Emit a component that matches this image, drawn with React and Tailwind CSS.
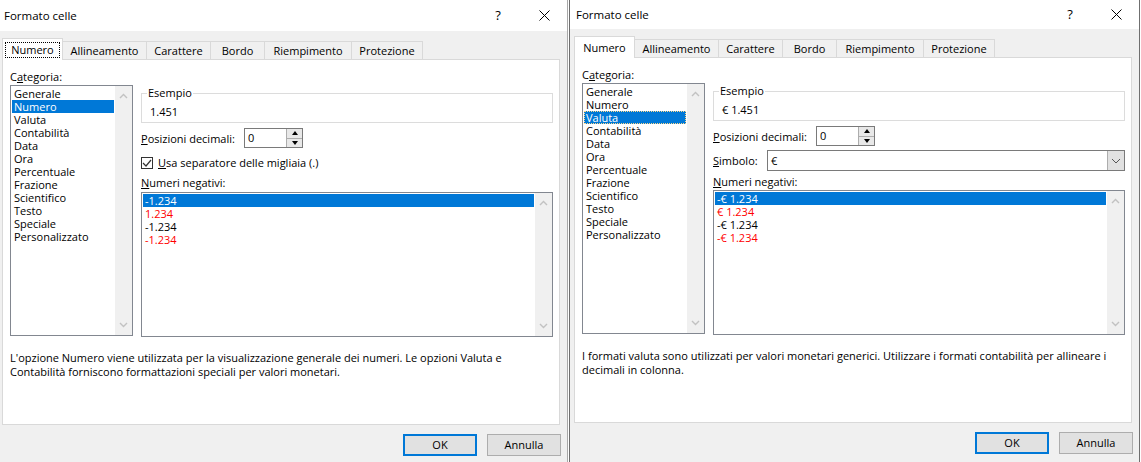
import React from 'react';

const categories = [
  'Generale', 'Numero', 'Valuta', 'Contabilità', 'Data', 'Ora', 'Percentuale',
  'Frazione', 'Scientifico', 'Testo', 'Speciale', 'Personalizzato',
];

const tabs = [
  { label: 'Numero', w: 'w-[61px]' },
  { label: 'Allineamento', w: 'w-[84px]' },
  { label: 'Carattere', w: 'w-[64px]' },
  { label: 'Bordo', w: 'w-[54px]' },
  { label: 'Riempimento', w: 'w-[87px]' },
  { label: 'Protezione', w: 'w-[71px]' },
];

function Chevron({ up }) {
  return (
    <svg width="9" height="6" viewBox="0 0 9 6">
      <polyline
        points={up ? '1,5 4.5,1.5 8,5' : '1,1 4.5,4.5 8,1'}
        fill="none"
        stroke="#c2c2c2"
        strokeWidth="1.4"
      />
    </svg>
  );
}

function ListBox({ items, selected, focus, className }) {
  return (
    <div className={`flex border border-[#828790] bg-white ${className}`}>
      <div className="flex-1 p-[1px]">
        {items.map((it, i) => (
          <div
            key={i}
            className={`h-[13px] leading-[13px] pl-[2px] whitespace-nowrap ${
              i === selected ? 'bg-[#0078d7] text-white' : it.red ? 'text-[#ff0000]' : 'text-black'
            } ${i === selected && focus ? 'outline-1 outline-dotted outline-[#ffd98a] -outline-offset-1' : ''}`}
          >
            {it.label}
          </div>
        ))}
      </div>
      <div className="w-[17px] bg-[#f0f0f0] flex flex-col justify-between">
        <div className="h-[20px] flex items-center justify-center">
          <Chevron up />
        </div>
        <div className="h-[20px] flex items-center justify-center">
          <Chevron />
        </div>
      </div>
    </div>
  );
}

function Spinner() {
  return (
    <div className="flex w-[59px] h-[20px] border border-[#7a7a7a] bg-white">
      <div className="flex-1 pl-[3px] leading-[18px]">0</div>
      <div className="w-[16px] flex flex-col border-l border-[#adadad]">
        <div className="flex-1 flex items-center justify-center bg-[#e8e8e8] border-b border-[#adadad]">
          <svg width="6" height="4" viewBox="0 0 6 4">
            <polygon points="0,4 3,0 6,4" fill="#000" />
          </svg>
        </div>
        <div className="flex-1 flex items-center justify-center bg-[#e8e8e8]">
          <svg width="6" height="4" viewBox="0 0 6 4">
            <polygon points="0,0 6,0 3,4" fill="#000" />
          </svg>
        </div>
      </div>
    </div>
  );
}

function Dialog({ variant, titleH, className }) {
  const isValuta = variant === 'valuta';
  const negatives = isValuta
    ? [
        { label: '-€ 1.234' },
        { label: '€ 1.234', red: true },
        { label: '-€ 1.234' },
        { label: '-€ 1.234', red: true },
      ]
    : [
        { label: '-1.234' },
        { label: '1.234', red: true },
        { label: '-1.234' },
        { label: '-1.234', red: true },
      ];

  return (
    <div className={`w-[571px] h-[462px] shrink-0 flex flex-col bg-[#f0f0f0] ${className}`}>
      {/* title bar */}
      <div className={`${titleH} bg-white flex items-center pl-[6px] shrink-0`}>
        <span className="text-[11.5px]">Formato celle</span>
        <div className="ml-auto flex h-full">
          <div className="w-[46px] flex items-center justify-center text-[13px]">?</div>
          <div className="w-[46px] flex items-center justify-center">
            <svg width="11" height="11" viewBox="0 0 11 11">
              <path d="M0.5 0.5 L10.5 10.5 M10.5 0.5 L0.5 10.5" stroke="#000" strokeWidth="1" />
            </svg>
          </div>
        </div>
      </div>

      <div className="pl-[4px] pt-[7px]">
        {/* tabs */}
        <div className="flex items-end h-[22px] relative z-10">
          {tabs.map((t, i) =>
            i === 0 ? (
              <div
                key={t.label}
                className={`${t.w} h-[22px] bg-white border-x border-t border-[#d9d9d9] flex justify-center pt-[3px]`}
              >
                <span
                  className={`h-[16px] px-[5px] leading-[14px] border ${
                    isValuta ? 'border-transparent' : 'border-dotted border-black'
                  }`}
                >
                  {t.label}
                </span>
              </div>
            ) : (
              <div
                key={t.label}
                className={`${t.w} h-[18px] mb-[1px] bg-[#f0f0f0] border-t border-r border-[#d9d9d9] flex items-center justify-center pt-[1px]`}
              >
                {t.label}
              </div>
            )
          )}
        </div>

        {/* panel */}
        <div className="-mt-px w-[558px] h-[366px] bg-white border border-[#d9d9d9] pl-[7px] pt-[10px]">
          <div className="flex">
            <div className="w-[123px] shrink-0">
              <div className="h-[13px] leading-[13px]">
                C<span className="underline">a</span>tegoria:
              </div>
              <ListBox
                className="mt-[2px] h-[251px]"
                items={categories.map((c) => ({ label: c }))}
                selected={isValuta ? 2 : 1}
                focus={isValuta}
              />
            </div>

            <div className="ml-[8px] w-[412px] pt-[23px]">
              {/* group box */}
              <div className="relative h-[30px] border border-[#dcdcdc] pl-[8px] pt-[11px]">
                <span className="absolute left-[5px] -top-[8px] bg-white px-[1px] leading-[13px]">
                  Esempio
                </span>
                <div className="leading-[13px]">{isValuta ? '€ 1.451' : '1.451'}</div>
              </div>

              <div className="mt-[5px] flex items-center">
                <div className="w-[103px] leading-[13px]">
                  <span className="underline">P</span>osizioni decimali:
                </div>
                <Spinner />
              </div>

              {isValuta ? (
                <div className="mt-[4px] flex items-center">
                  <div className="w-[54px] leading-[13px]">
                    <span className="underline">S</span>imbolo:
                  </div>
                  <div className="w-[358px] h-[21px] flex border border-[#7a7a7a] bg-white">
                    <div className="flex-1 pl-[3px] leading-[19px]">€</div>
                    <div className="w-[17px] bg-[#e1e1e1] border-l border-[#adadad] flex items-center justify-center">
                      <svg width="10" height="6" viewBox="0 0 10 6">
                        <polyline points="1,1 5,5 9,1" fill="none" stroke="#555" strokeWidth="1" />
                      </svg>
                    </div>
                  </div>
                </div>
              ) : (
                <div className="mt-[8px] h-[13px] flex items-center">
                  <div className="w-[12px] h-[12px] border border-[#333] bg-white flex items-center justify-center">
                    <svg width="10" height="10" viewBox="0 0 10 10">
                      <polyline points="1,5 4,8 9,2" fill="none" stroke="#333" strokeWidth="1.2" />
                    </svg>
                  </div>
                  <span className="ml-[5px] leading-[13px]">
                    <span className="underline">U</span>sa separatore delle migliaia (.)
                  </span>
                </div>
              )}

              <div className={`${isValuta ? 'mt-[4px]' : 'mt-[7px]'} h-[13px] leading-[13px]`}>
                <span className="underline">N</span>umeri negativi:
              </div>
              <ListBox
                className={`${isValuta ? 'mt-[2px]' : 'mt-[3px]'} h-[145px]`}
                items={negatives}
                selected={0}
              />
            </div>
          </div>

          <p className="mt-[14px] leading-[14px]">
            {isValuta ? (
              <>
                I formati valuta sono utilizzati per valori monetari generici. Utilizzare i formati contabilità per allineare i
                <br />
                decimali in colonna.
              </>
            ) : (
              <>
                L'opzione Numero viene utilizzata per la visualizzazione generale dei numeri. Le opzioni Valuta e
                <br />
                Contabilità forniscono formattazioni speciali per valori monetari.
              </>
            )}
          </p>
        </div>

        {/* buttons */}
        <div className="w-[559px] mt-[9px] flex justify-end gap-[10px]">
          <button className="w-[74px] h-[22px] bg-[#e1e1e1] border-2 border-[#0078d7] leading-[18px]">OK</button>
          <button className="w-[74px] h-[22px] bg-[#e1e1e1] border border-[#adadad] leading-[20px]">Annulla</button>
        </div>
      </div>
    </div>
  );
}

export default function App() {
  return (
    <div className="w-[1141px] h-[462px] overflow-hidden bg-white flex font-['Open_Sans',sans-serif] text-[11px] text-black">
      <Dialog variant="numero" titleH="h-[31px]" className="-ml-[3px] border-x border-[#a8a8a8]" />
      <div className="w-[1px] shrink-0" />
      <Dialog variant="valuta" titleH="h-[29px]" className="border-x border-[#6f6f6f]" />
    </div>
  );
}
